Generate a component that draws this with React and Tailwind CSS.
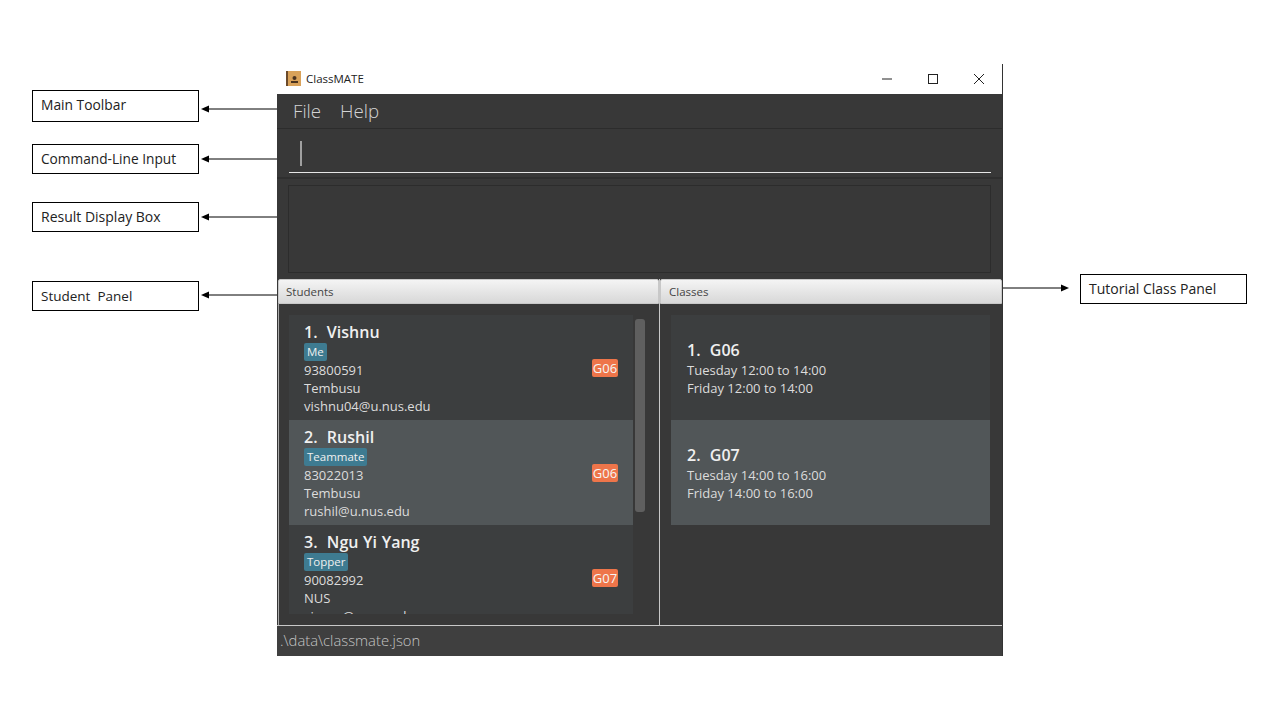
const students = [
  { name: 'Vishnu', tag: 'Me', phone: '93800591', addr: 'Tembusu', email: 'vishnu04@u.nus.edu', group: 'G06' },
  { name: 'Rushil', tag: 'Teammate', phone: '83022013', addr: 'Tembusu', email: 'rushil@u.nus.edu', group: 'G06' },
  { name: 'Ngu Yi Yang', tag: 'Topper', phone: '90082992', addr: 'NUS', email: 'yiyang@u.nus.edu', group: 'G07' },
]

const classes = [
  { name: 'G06', times: ['Tuesday 12:00 to 14:00', 'Friday 12:00 to 14:00'] },
  { name: 'G07', times: ['Tuesday 14:00 to 16:00', 'Friday 14:00 to 16:00'] },
]

const labels = [
  { text: 'Main Toolbar', box: 'top-[90px] h-[32px] pb-[1px] text-[13.8px]' },
  { text: 'Command-Line Input', box: 'top-[144px] h-[30px] pt-[1px] text-[13.7px]' },
  { text: 'Result Display Box', box: 'top-[202px] h-[30px] pb-[1px] text-[14px]' },
  { text: 'Student  Panel', box: 'top-[281px] h-[30px] pt-[1px] text-[13.5px]' },
]

const arrows = [
  { y: 'top-[104px]' },
  { y: 'top-[154px]' },
  { y: 'top-[212px]' },
  { y: 'top-[290px]' },
]

function Arrow() {
  return (
    <svg width="78" height="10" viewBox="0 0 78 10" className="block">
      <path d="M7 5H78" stroke="#000" strokeWidth="1" />
      <path d="M0 5L8 1.5V8.5Z" fill="#000" />
    </svg>
  )
}

function PanelHeader({ children, className }) {
  return (
    <div className={`h-[25px] shrink-0 border border-[#c8c8c8] rounded-t-[2px] bg-gradient-to-b from-[#f4f4f4] to-[#d8d8d8] text-[11.5px] leading-[23px] text-[#444] ${className}`}>
      {children}
    </div>
  )
}

function StudentCard({ s, i }) {
  return (
    <div className={`h-[105px] shrink-0 pl-[15px] pr-[15px] flex items-start justify-between ${i % 2 ? 'bg-[#515658]' : 'bg-[#3c3e3f]'}`}>
      <div>
        <div className="h-[28px] pt-[6px] text-[16px] leading-[22px] font-semibold text-[#f0f0f0] whitespace-pre [word-spacing:0.5px]">{i + 1}.  {s.name}</div>
        <div className="w-fit h-[18px] px-[3px] rounded-[2px] bg-[#3e7b91] text-[11.5px] leading-[18px] text-[#f0f0f0]">{s.tag}</div>
        <div className="text-[13px] leading-[18px] text-[#dcdcdc]">{s.phone}</div>
        <div className="text-[13px] leading-[18px] text-[#dcdcdc]">{s.addr}</div>
        <div className="text-[13px] leading-[18px] text-[#dcdcdc]">{s.email}</div>
      </div>
      <div className="mt-[44px] w-[26px] h-[18px] rounded-[2px] bg-[#ee754a] text-center text-[13px] leading-[18px] text-[#f5f5f5]">{s.group}</div>
    </div>
  )
}

function ClassCard({ c, i }) {
  return (
    <div className={`h-[105px] pl-[16px] pt-[24px] ${i % 2 ? 'bg-[#515658]' : 'bg-[#3c3e3f]'}`}>
      <div className="text-[16px] leading-[22px] font-semibold text-[#f0f0f0] whitespace-pre [word-spacing:0.5px]">{i + 1}.  {c.name}</div>
      {c.times.map((t) => (
        <div key={t} className="text-[13px] leading-[18px] text-[#dcdcdc]">{t}</div>
      ))}
    </div>
  )
}

export default function App() {
  return (
    <div className="relative w-[1280px] h-[720px] overflow-hidden bg-white font-['Open_Sans','Noto_Sans',sans-serif]">
      {labels.map((l) => (
        <div key={l.text} className={`absolute left-[32px] w-[167px] border border-black pl-[8px] flex items-center text-[#222] whitespace-pre ${l.box}`}>
          {l.text}
        </div>
      ))}
      {arrows.map((a) => (
        <div key={a.y} className={`absolute left-[201px] ${a.y}`}>
          <Arrow />
        </div>
      ))}

      <div className="absolute left-[1080px] top-[274px] w-[167px] h-[30px] border border-black pl-[8px] pb-[1px] flex items-center text-[14px] text-[#222]">
        Tutorial Class Panel
      </div>
      <div className="absolute left-[1003px] top-[283px] rotate-180">
        <svg width="66" height="10" viewBox="0 0 66 10" className="block">
          <path d="M7 5H66" stroke="#000" strokeWidth="1" />
          <path d="M0 5L8 1.5V8.5Z" fill="#000" />
        </svg>
      </div>

      {/* app window */}
      <div className="absolute left-[277px] top-[64px] w-[726px] h-[592px] flex flex-col border-r border-[#333] bg-[#383838]">
        <div className="h-[30px] shrink-0 bg-white flex items-center pl-[9px] pb-[1px]">
          <svg width="15" height="15" viewBox="0 0 15 15" className="mr-[5px]">
            <rect width="15" height="15" fill="#d9a25a" />
            <rect width="2" height="15" fill="#6b4a2a" />
            <circle cx="8.5" cy="7" r="2" fill="#4a3320" />
            <rect x="5" y="10" width="7" height="2" fill="#4a3320" />
          </svg>
          <span className="text-[11.5px] text-[#222]">ClassMATE</span>
          <svg width="12" height="12" viewBox="0 0 12 12" className="ml-auto mr-[34px]">
            <path d="M1 6H11" stroke="#222" strokeWidth="1" />
          </svg>
          <svg width="12" height="12" viewBox="0 0 12 12" className="mr-[34px]">
            <rect x="1.5" y="1.5" width="9" height="9" fill="none" stroke="#222" strokeWidth="1" />
          </svg>
          <svg width="12" height="12" viewBox="0 0 12 12" className="mr-[17px]">
            <path d="M1 1L11 11M11 1L1 11" stroke="#222" strokeWidth="1" />
          </svg>
        </div>

        <div className="h-[35px] shrink-0 border-b border-[#2c2c2c] flex items-center gap-[19px] pl-[16px] text-[18.7px] font-light text-[#d4d4d4]">
          <span>File</span>
          <span>Help</span>
        </div>

        <div className="h-[50px] shrink-0 border-b-2 border-[#2f2f2f] pl-[12px] pr-[11px] pt-[10px]">
          <div className="h-[34px] border-b border-[#e6e6e6] pl-[11px] pt-[2px]">
            <div className="w-[2px] h-[25px] bg-[#a0a0a0]"></div>
          </div>
        </div>

        <div className="h-[100px] shrink-0 px-[11px] pt-[6px]">
          <div className="h-[88px] border border-[#2c2c2c]"></div>
        </div>

        <div className="flex-1 min-h-0 flex">
          <div className="w-[382px] flex flex-col ml-[1px] border-r border-[#c8c8c8]">
            <PanelHeader className="pl-[7px]">Students</PanelHeader>
            <div className="relative flex-1 border-l border-[#aaaaaa] pl-[10px] pt-[11px]">
              <div className="w-[344px] h-[299px] overflow-hidden flex flex-col">
                {students.map((s, i) => (
                  <StudentCard key={s.name} s={s} i={i} />
                ))}
              </div>
              <div className="absolute left-[356px] top-[15px] w-[10px] h-[193px] rounded-[3px] bg-[#5f5f5f]"></div>
            </div>
          </div>
          <div className="flex-1 flex flex-col">
            <PanelHeader className="pl-[8px]">Classes</PanelHeader>
            <div className="pl-[11px] pr-[12px] pt-[11px]">
              {classes.map((c, i) => (
                <ClassCard key={c.name} c={c} i={i} />
              ))}
            </div>
          </div>
        </div>

        <div className="h-[31px] shrink-0 border-t border-[#c8c8c8] bg-[#3f3f3f] pl-[3px] text-[14.8px] leading-[29px] font-light text-[#c4c4c4]">
          .\data\classmate.json
        </div>
      </div>
    </div>
  )
}
